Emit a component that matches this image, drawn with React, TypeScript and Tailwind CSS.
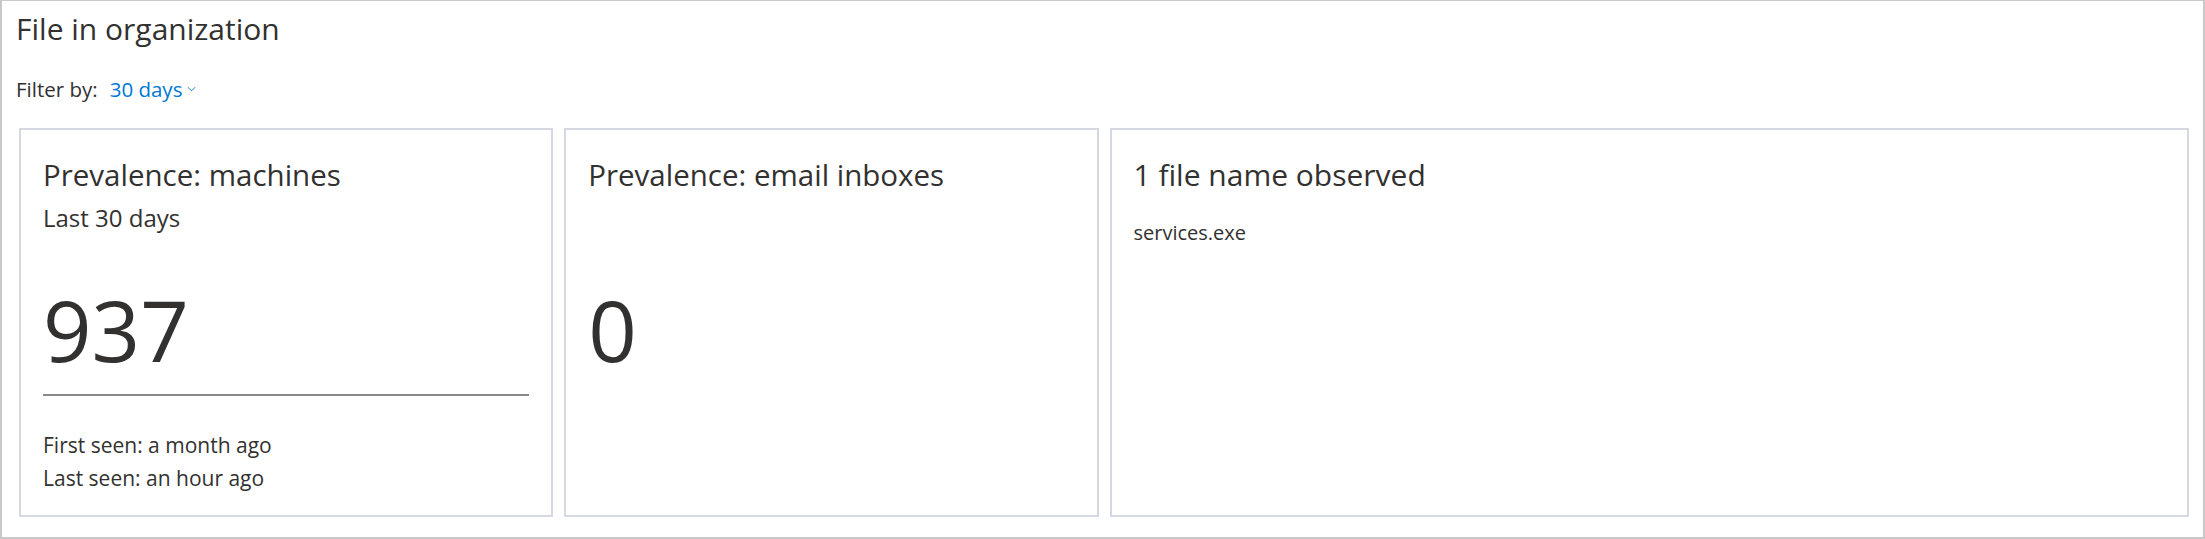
import React from 'react'

function Chevron() {
  return (
    <svg viewBox="0 0 10 6" width="9" height="6" fill="none" stroke="currentColor" strokeWidth="1">
      <polyline points="1,1 5,5 9,1" />
    </svg>
  )
}

function Card({ children, wide }: { children: React.ReactNode; wide?: boolean }) {
  return (
    <div
      className={`h-[389px] border-2 border-[#d5d8e2] px-[22px] pt-[27px] flex flex-col ${
        wide ? 'col-span-2' : ''
      }`}
    >
      {children}
    </div>
  )
}

export default function App() {
  return (
    <div className="w-[2205px] h-[539px] border-2 border-t border-[#c8c8c8] bg-white text-[#323130] font-['Open_Sans',sans-serif]">
      {/* Header */}
      <h2 className="pl-[14px] pt-[10px] text-[30px] leading-[36px]">File in organization</h2>

      {/* Filter */}
      <div className="mt-[28px] pl-[14px] flex items-center h-[28px] text-[20.5px]">
        <span>Filter by:</span>
        <button className="ml-[12px] flex items-center gap-[5px] text-[#0078d4]">
          30 days
          <Chevron />
        </button>
      </div>

      {/* Cards */}
      <div className="mt-[25px] pl-[17px] pr-[14px] grid grid-cols-4 gap-[11px]">
        <Card>
          <div className="text-[29.5px] leading-[36px]">Prevalence: machines</div>
          <div className="mt-[10px] text-[24px] leading-[30px]">Last 30 days</div>
          <div className="mt-[54px] text-[85px] leading-[85px]">937</div>
          <div className="mt-[22px] border-t-2 border-[#8a8a8a]" />
          <div className="mt-[33px] text-[21px] leading-[33px]">
            <div>First seen: a month ago</div>
            <div>Last seen: an hour ago</div>
          </div>
        </Card>
        <Card>
          <div className="text-[29.5px] leading-[36px]">Prevalence: email inboxes</div>
          <div className="mt-[94px] text-[85px] leading-[85px]">0</div>
        </Card>
        <Card wide>
          <div className="text-[30px] leading-[36px]">1 file name observed</div>
          <div className="mt-[26px] text-[20px] leading-[28px]">services.exe</div>
        </Card>
      </div>
    </div>
  )
}
